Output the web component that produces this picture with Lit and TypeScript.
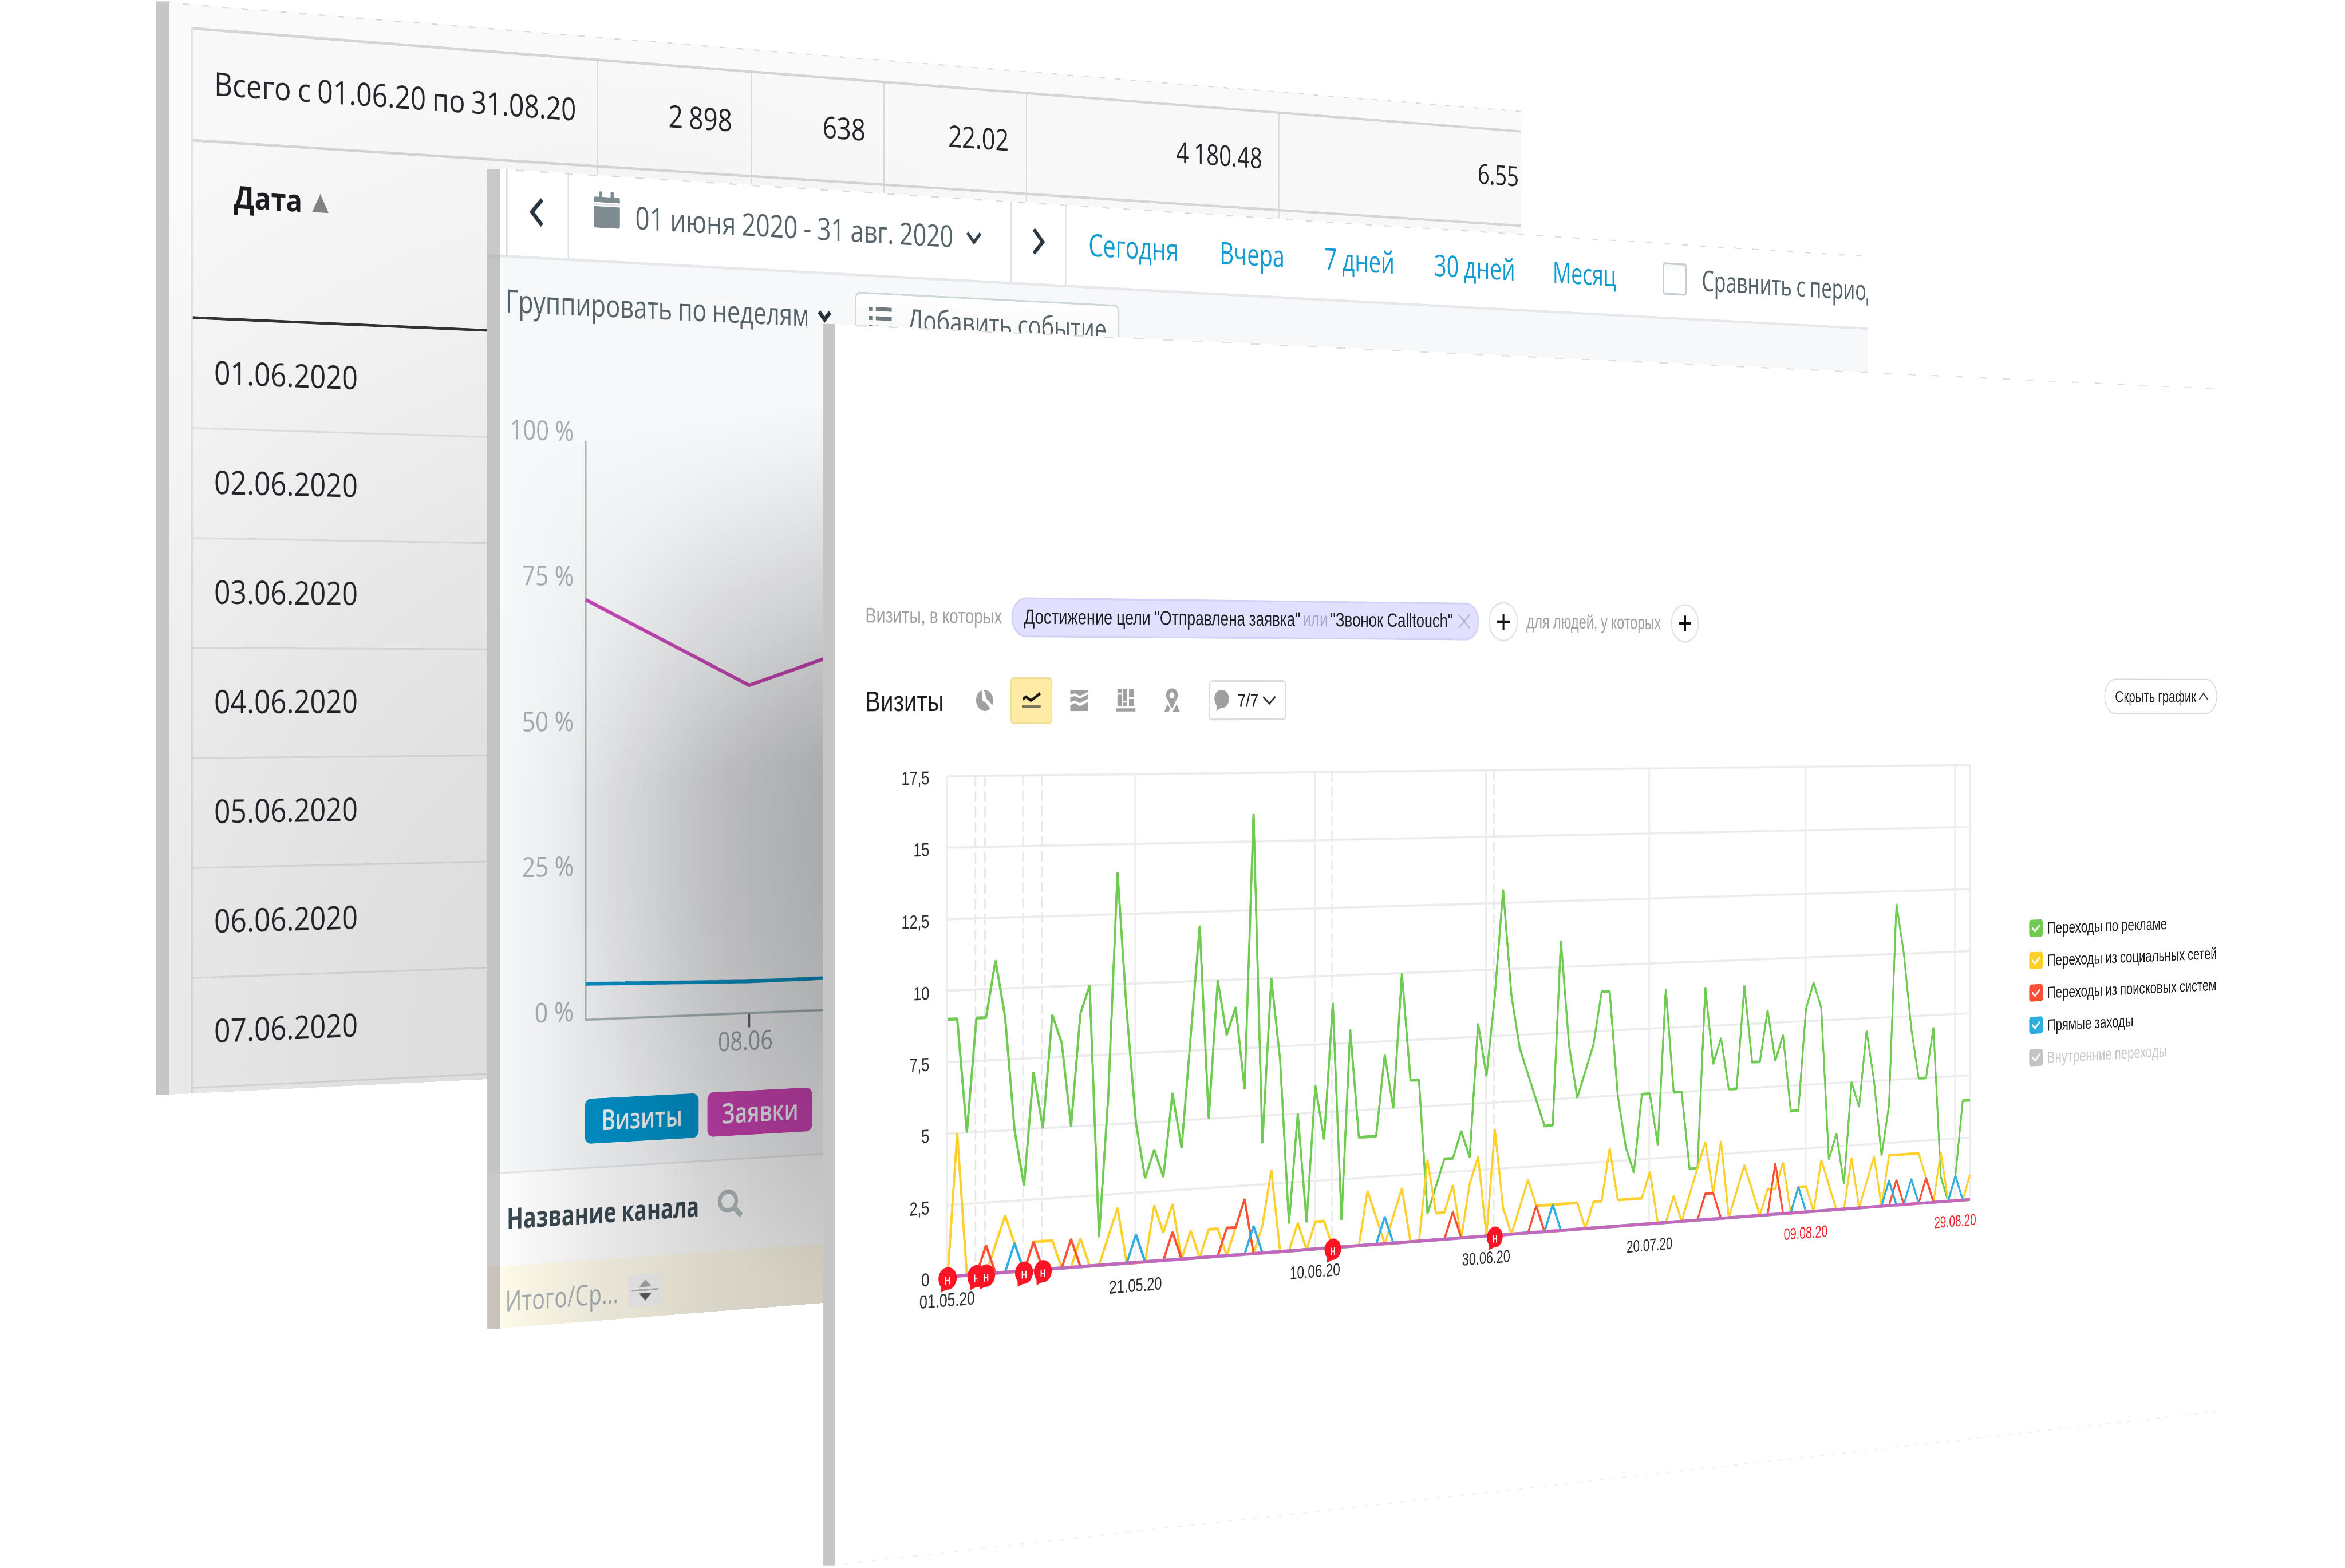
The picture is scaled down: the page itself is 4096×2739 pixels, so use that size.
import { LitElement, html, svg, css, nothing } from "lit";
import { customElement } from "lit/decorators.js";
import { styleMap } from "lit/directives/style-map.js";

/** A window standing in space: its left edge is seen flat, the right recedes. */
interface Plane {
  x: number; // left edge
  y: number; // top of the left edge
  slope: number; // fall of the top edge
  squeeze: number; // horizontal compression at the left edge
  fade: number; // loss of height per unit of width
}

const planeStyle = (p: Plane) => {
  const k = p.fade * p.squeeze;
  const m = [
    k * p.x + p.squeeze, k * p.y + p.slope * p.squeeze, 0, k,
    0, 1, 0, 0,
    0, 0, 1, 0,
    p.x, p.y, 0, 1,
  ];
  return styleMap({ transform: `matrix3d(${m.map((n) => n.toFixed(10)).join(",")})` });
};

/** A line of text set to an exact width. */
const line = (text: string, width: number, size: number, cls = "") => {
  const h = Math.round(size * 1.4);
  const bear = size * 0.05;
  return html`<svg class="line ${cls}" width=${width} height=${h} viewBox="0 0 ${width} ${h}">
    <text x=${-bear} y=${h / 2 + size * 0.358} font-size=${size}
      textLength=${width + bear * 2} lengthAdjust="spacingAndGlyphs">${text}</text>
  </svg>`;
};

const shared = css`
  :host { display: block; }
  * { box-sizing: border-box; }
  svg { display: block; overflow: visible; }
  .line { fill: currentColor; flex: none; word-spacing: -0.08em; }
  .bold { font-weight: 700; }
`;

/* ---------- Table window ---------- */

const TOTALS: [string, number][] = [
  ["2 898", 183], ["638", 126], ["22.02", 187], ["4 180.48", 287], ["6.55", 145],
];
const DATES = ["01.06.2020", "02.06.2020", "03.06.2020", "04.06.2020", "05.06.2020", "06.06.2020", "07.06.2020"];

@customElement("table-window")
class TableWindow extends LitElement {
  static styles = [shared, css`
    .window {
      position: relative; width: 4214px; height: 2377px; overflow: hidden;
      padding: 50px 0 0 57px; background: #fdfdfd; color: #23262b;
      font-family: "Open Sans", "Noto Sans", sans-serif;
    }
    .window::before, .window::after { content: ""; position: absolute; left: 0; pointer-events: none; }
    .window::before {
      top: 0; width: 100%; height: 3px;
      background: repeating-linear-gradient(90deg, transparent 0 34px, #dedede 34px 52px);
    }
    .window::after {
      inset: 0;
      background: radial-gradient(ellipse 2400px 2300px at 1300px 2350px,
        rgba(0,0,0,.13), rgba(0,0,0,.115) 30%, rgba(0,0,0,.08) 55%, rgba(0,0,0,.04) 78%, rgba(0,0,0,.012) 100%, rgba(0,0,0,.012));
    }
    .table { border-left: 4px solid #e5e5e5; background: #fbfbfb; height: 2327px; }
    .row { display: grid; grid-template-columns: 1122px 456px 408px 454px 846px 869px; }
    .cell { border-right: 4px solid #dedede; display: flex; align-items: center; justify-content: flex-end; padding-right: 59px; }
    .cell:first-child { justify-content: flex-start; padding: 0 0 0 60px; }
    .cell:last-child { border: 0; padding-right: 14px; }
    .totals { height: 250px; border-top: 6px solid #d8d8d8; border-bottom: 6px solid #d8d8d8; word-spacing: -0.14em; }
    .totals .cell { padding-bottom: 9px; }
    .totals .line { word-spacing: -0.14em; }
    .head { height: 387px; border-bottom: 6px solid #343434; }
    .head .cell:first-child { align-items: flex-start; padding: 68px 0 0 112px; gap: 30px; color: #1b1b20; }
    .arrow { margin-top: 30px; }
    .day { height: 240px; border-bottom: 4px solid #e9e6eb; display: flex; align-items: center; padding: 0 0 6px 60px; }
  `];
  render() {
    return html`<div class="window">
      <div class="table">
        <div class="row totals">
          <div class="cell">${line("Всего с 01.06.20 по 31.08.20", 995, 71)}</div>
          ${TOTALS.map(([t, w]) => html`<div class="cell">${line(t, w, 72)}</div>`)}
        </div>
        <div class="row head">
          <div class="cell">
            ${line("Дата", 177, 68, "bold")}
            <svg class="arrow" width="45" height="41" viewBox="0 0 45 41"><path d="M22.500 0 45 41H0Z" fill="#868686" /></svg>
          </div>
          ${TOTALS.map(() => html`<div class="cell"></div>`)}
        </div>
        ${DATES.map((d) => html`<div class="day">${line(d, 380, 71)}</div>`)}
      </div>
    </div>`;
  }
}

/* ---------- Channels window ---------- */

const PRESETS: [string, number][] = [
  ["Сегодня", 270], ["Вчера", 199], ["7 дней", 223], ["30 дней", 267], ["Месяц", 214],
];
const PERCENTS = [100, 75, 50, 25, 0];
const PERCENT_W = [169, 137, 137, 137, 104];

@customElement("channels-window")
class ChannelsWindow extends LitElement {
  static styles = [shared, css`
    .window {
      position: relative; width: 4312px; height: 2524px; overflow: hidden;
      display: flex; flex-direction: column; background: #f7f8fa; color: #556369;
      font-family: "Open Sans", "Noto Sans", sans-serif;
    }
    .window::before, .window::after { content: ""; position: absolute; left: 0; pointer-events: none; }
    .window::before {
      top: 0; width: 100%; height: 3px;
      background: repeating-linear-gradient(90deg, transparent 0 42px, #dcdcdc 42px 64px);
    }
    .window::after {
      top: 420px; width: 1000px; bottom: 0;
      background:
        radial-gradient(ellipse 820px 1050px at 1000px 1060px, rgba(0,0,0,.18), rgba(0,0,0,.13) 40%, transparent),
        linear-gradient(90deg, transparent, rgba(0,0,0,.08) 26%, rgba(0,0,0,.14) 55%, rgba(0,0,0,.18) 90%);
      -webkit-mask-image: linear-gradient(172deg, transparent 8%, rgba(0,0,0,.55) 26%, #000 44%);
      mask-image: linear-gradient(172deg, transparent 8%, rgba(0,0,0,.55) 26%, #000 44%);
    }
    .toolbar {
      flex: none; height: 193px; background: #fff; border-bottom: 6px solid #e6e8eb;
      display: grid; grid-template-columns: 163px 1249px 164px 1fr; padding-left: 16px;
    }
    .cell { border-left: 4px solid #dfe1e2; display: flex; align-items: center; justify-content: center; padding-bottom: 8px; }
    .prev { padding-right: 8px; }
    .date { display: grid; grid-template-columns: 115px 933px 45px; justify-content: start; padding-left: 66px; }
    .calendar { margin-bottom: 28px; }
    .presets { display: grid; grid-template-columns: 407px 335px 362px 403px 384px 143px auto; justify-content: start; padding: 0 0 8px 71px; color: #0e9bd2; }
    .presets .line { word-spacing: -0.12em; }
    .box { width: 85px; height: 82px; border: 5px solid #c5ced2; border-radius: 8px; background: linear-gradient(#f4f6f7, #fff 25%); }
    .compare, .grouping { color: #556369; }
    .options { flex: none; margin-top: 35px; height: 118px; padding-left: 18px; display: grid; grid-template-columns: 849px 106px 785px; align-items: center; }
    .add { height: 118px; border: 4px solid #cdd7da; border-radius: 16px; background: linear-gradient(#fff, #f4f5f6); display: grid; grid-template-columns: 117px auto; justify-content: start; align-items: center; padding-left: 35px; }
    .chart { flex: none; margin-top: 134px; font-size: 60px; }
    .badges { flex: none; margin-top: 54px; padding-left: 225px; display: flex; gap: 24px; color: #f0f4f6; font-weight: 600; }
    .badge { height: 99px; border-radius: 16px; display: flex; align-items: center; justify-content: center; padding-bottom: 3px; }
    .visits { width: 309px; background: #0093cb; }
    .orders { width: 293px; background: #cc44b5; }
    .channels { flex: none; margin-top: 51px; height: 205px; border-top: 4px solid #e6e7ea; background: #fdfdfe; color: #3a4850; display: grid; grid-template-columns: 566px 70px; align-items: center; padding: 0 0 5px 21px; }
    .total { flex: none; height: 135px; background: #fefaea; color: #a4adb2; display: grid; grid-template-columns: 325px 89px; align-items: center; padding: 16px 0 0 17px; }
    .sort { width: 89px; height: 71px; background: #f6f6f8; }
  `];
  render() {
    return html`<div class="window">
      <div class="toolbar">
        <div class="cell prev">
          <svg width="41" height="64" viewBox="0 0 41 64"><path d="M36 4 9 32 36 60" fill="none" stroke="#2a3742" stroke-width="9.500" /></svg>
        </div>
        <div class="cell date">
          <svg class="calendar" width="70" height="80" viewBox="0 0 70 80" fill="#7e8b8f">
            <rect x="14" y="0" width="9" height="18" rx="3" /><rect x="45" y="0" width="9" height="18" rx="3" />
            <path d="M4 12H66Q70 12 70 16V24H0V16Q0 12 4 12Z" /><path d="M0 33H70V74Q70 80 64 80H6Q0 80 0 74Z" />
            <rect x="0" y="27" width="70" height="3" fill="#dfe3e4" />
          </svg>
          ${line("01 июня 2020 - 31 авг. 2020", 891, 70)}
          <svg width="45" height="28" viewBox="0 0 45 28"><path d="M3 3 22.500 24 42 3" fill="none" stroke="#36434d" stroke-width="8" /></svg>
        </div>
        <div class="cell">
          <svg width="36" height="64" viewBox="0 0 36 64"><path d="M4 4 31 32 4 60" fill="none" stroke="#2a3742" stroke-width="9.500" /></svg>
        </div>
        <div class="cell presets">
          ${PRESETS.map(([t, w]) => line(t, w, 74))}
          <span class="box"></span>
          ${line("Сравнить с период", 641, 73, "compare")}
        </div>
      </div>
      <div class="options">
        ${line("Группировать по неделям", 821, 70, "grouping")}
        <svg width="39" height="24" viewBox="0 0 39 24"><path d="M4 3 19.500 20 35 3" fill="none" stroke="#26333d" stroke-width="10" /></svg>
        <div class="add">
          <svg width="68" height="52" viewBox="0 0 68 52" fill="#6d797e">
            ${[0, 21, 42].map((y) => svg`<rect x="2" y=${y} width="9" height="9" /><rect x="21" y=${y} width="46" height="9" />`)}
          </svg>
          ${line("Добавить событие", 586, 70)}
        </div>
      </div>
      <svg class="chart" width="1130" height="1500" viewBox="0 480 1130 1500">
        ${PERCENTS.map((p, i) => svg`<text x=${195 - PERCENT_W[i]} y=${588 + i * 318.5}
          textLength=${PERCENT_W[i]} lengthAdjust="spacingAndGlyphs" fill="#a3adb1">${p} %</text>`)}
        <path d="M227 587V1860H1130" fill="none" stroke="#aab7bc" stroke-width="5" />
        <path d="M674 1862V1892" stroke="#555c60" stroke-width="5" />
        <text x="587" y="1943" textLength="153" lengthAdjust="spacingAndGlyphs" fill="#98a3a7">08.06</text>
        <path d="M227 1781 674 1789 1121 1786" fill="none" stroke="#0a93c9" stroke-width="8" />
        <path d="M227 936 674 1124 1121 997" fill="none" stroke="#c947b6" stroke-width="8" />
      </svg>
      <div class="badges">
        <div class="badge visits">${line("Визиты", 213, 64)}</div>
        <div class="badge orders">${line("Заявки", 208, 64)}</div>
      </div>
      <div class="channels">
        ${line("Название канала", 511, 63, "bold")}
        <svg width="70" height="64" viewBox="0 0 70 64"><ellipse cx="28" cy="25" rx="23" ry="21" fill="none" stroke="#b5bdbf" stroke-width="10" /><path d="M44 40 65 59" stroke="#b5bdbf" stroke-width="12" /></svg>
      </div>
      <div class="total">
        ${line("Итого/Ср...", 295, 63)}
        <svg class="sort" viewBox="0 0 89 71"><path d="M46 12 63 28H29Z" fill="#ababab" /><rect x="9" y="33" width="71" height="4" fill="#b9b9b9" /><path d="M46 58 29 42H63Z" fill="#5c5c5c" /></svg>
      </div>
    </div>`;
  }
}

/* ---------- Visits window ---------- */

const DAYS = 122;
const ADS = [
  9, 9, 5, 9, 9, 11, 9, 5, 3, 7, 5, 9, 8, 5, 9, 10, 1, 6, 14, 9, 5, 3, 4, 3, 6, 4, 8, 12, 5, 10, 8, 9, 6, 16, 4, 10, 7, 1, 5, 1, 6,
  4, 9, 1, 8, 4, 4, 4, 7, 5, 10, 6, 6, 1, 2, 3, 3, 4, 3, 8, 6, 9, 13, 9, 7, 6, 5, 4, 4, 11, 7, 5, 6, 7, 9, 9, 5, 3, 2, 5, 5,
  3, 9, 5, 5, 2, 2, 9, 6, 7, 5, 5, 9, 6, 6, 8, 6, 7, 4, 4, 8, 9, 8, 2, 3, 1, 5, 4, 7, 5, 2, 4, 12, 10, 7, 5, 5, 7, 1, 0, 1, 4, 4,
];
const SOCIAL = [
  0, 5, 0, 0, 0, 1, 2, 1, 0, 1, 1, 1, 0, 0, 1, 0, 0, 1, 2, 0, 0, 0, 2, 1, 2, 0, 1, 0, 1, 1, 0, 1, 2, 0, 1, 3, 0, 0, 1, 0, 1,
  1, 0, 0, 0, 0, 2, 1, 0, 1, 2, 0, 0, 3, 1, 1, 2, 0, 2, 3, 0, 4, 1, 0, 1, 2, 1, 1, 1, 1, 1, 1, 0, 1, 1, 3, 1, 1, 1, 1, 2,
  0, 0, 1, 0, 1, 2, 3, 1, 3, 0, 1, 2, 1, 0, 1, 1, 2, 0, 1, 1, 0, 2, 1, 0, 0, 2, 0, 1, 2, 0, 2, 2, 2, 2, 2, 1, 0, 2, 0, 0, 0, 1,
];
const sparse = (hits: Record<number, number>) => Array.from({ length: DAYS + 1 }, (_, i) => hits[i] ?? 0);
const SEARCH = sparse({ 4: 1, 9: 1, 13: 1, 24: 1, 30: 1, 31: 1, 32: 2, 56: 1, 66: 1, 87: 1, 88: 1, 96: 2, 112: 1, 116: 1 });
const DIRECT = sparse({ 7: 1, 20: 1, 33: 1, 48: 1, 68: 1, 99: 1, 111: 1, 114: 1, 120: 1 });
const INNER = sparse({});

const X0 = 328.5;
const X1 = 3798.5;
const YTOP = 987;
const YBASE = 2092;
const px = (day: number) => X0 + ((X1 - X0) * day) / DAYS;
const py = (v: number) => YBASE - ((YBASE - YTOP) * v) / 17.5;
const points = (data: number[]) => data.map((v, i) => `${px(i).toFixed(1)},${py(v).toFixed(1)}`).join(" ");

const SERIES: [number[], string][] = [
  [ADS, "#70cb52"], [SOCIAL, "#ffcf2d"], [SEARCH, "#ff5035"], [DIRECT, "#31aee1"], [INNER, "#c566bd"],
];
const TICKS: [number, string, boolean][] = [
  [0, "01.05.20", false], [20, "21.05.20", false], [40, "10.06.20", false], [60, "30.06.20", false],
  [80, "20.07.20", false], [100, "09.08.20", true], [120, "29.08.20", true],
];
const NOTES = [0, 3, 4, 8, 10, 42, 61];
const LEVELS: [number, string][] = [
  [17.5, "17,5"], [15, "15"], [12.5, "12,5"], [10, "10"], [7.5, "7,5"], [5, "5"], [2.5, "2,5"], [0, "0"],
];
const LEGEND: [string, number, string][] = [
  ["Переходы по рекламе", 484, "#70cb52"],
  ["Переходы из социальных сетей", 693, "#ffcf2d"],
  ["Переходы из поисковых систем", 691, "#ff5035"],
  ["Прямые заходы", 346, "#31aee1"],
  ["Внутренние переходы", 484, "#c4c4c4"],
];

@customElement("visits-window")
class VisitsWindow extends LitElement {
  static styles = [shared, css`
    .window {
      position: relative; width: 4811px; height: 2702px; padding: 583px 10px 0 91px; background: #fff; color: #1c1c20;
      font-family: "Liberation Sans", Arial, sans-serif;
    }
    .window::before, .window::after { content: ""; position: absolute; left: 0; width: 100%; height: 3px; }
    .window::before { top: 0; background: repeating-linear-gradient(90deg, transparent 0 62px, #e0e0e0 62px 92px); }
    .window::after { bottom: 0; background: repeating-linear-gradient(90deg, transparent 0 26px, #f1f1f1 26px 40px); }
    .filter { height: 102px; display: grid; grid-template-columns: 427px 1524px 132px 505px 99px; align-items: center; }
    .filter .line { margin-bottom: 3px; }
    .muted { color: #a0a0a0; }
    .or { color: #aaa6cc; }
    .pill { width: 1492px; height: 89px; border-radius: 45px; background: #e1e1ff; border: 4px solid #d3d1f5; padding-left: 36px; display: grid; grid-template-columns: 869px 90px 423px 39px; align-items: center; }
    .plus { width: 101px; height: 94px; border-radius: 50%; border: 4px solid #e3e3e3; display: flex; align-items: center; justify-content: center; }
    .tools { margin-top: 82px; height: 105px; display: grid; grid-template-columns: 320px 104px 181px 141px 148px 141px 246px 1fr; align-items: center; }
    .chosen { width: 126px; height: 105px; border-radius: 10px; background: #ffeba6; border: 4px solid #f3dd9b; display: flex; align-items: center; justify-content: center; }
    .notes { height: 92px; border: 4px solid #dcdcdc; border-radius: 10px; padding-left: 13px; display: grid; grid-template-columns: 75px 78px 43px; align-items: center; }
    .hide { justify-self: end; margin-bottom: 14px; width: 467px; height: 92px; border: 3px solid #d9d9d9; border-radius: 46px; padding-left: 43px; display: grid; grid-template-columns: 344px 40px; align-items: center; }
    .body { margin-top: 28px; display: grid; grid-template-columns: 3941px 1fr; }
    .plot { font-size: 42px; }
    .legend { padding-top: 466px; }
    .item { height: 83.2px; display: grid; grid-template-columns: 73px auto; justify-content: start; align-items: center; }
    .check { width: 54px; height: 44px; border-radius: 8px; display: flex; align-items: center; justify-content: center; }
    .off { color: #c9c9c9; }
  `];
  private plus = html`<span class="plus"><svg width="42" height="38" viewBox="0 0 42 38"><path d="M21 0V38M0 19H42" stroke="#111" stroke-width="6" /></svg></span>`;

  render() {
    return html`<div class="window">
      <div class="filter">
        ${line("Визиты, в которых", 397, 46, "muted")}
        <div class="pill">
          ${line('Достижение цели "Отправлена заявка"', 857, 46)}
          ${line("или", 78, 46, "or")}
          ${line('"Звонок Calltouch"', 402, 46)}
          <svg width="39" height="34" viewBox="0 0 39 34"><path d="M1 1 38 33M38 1 1 33" stroke="#b3b1cf" stroke-width="3.500" /></svg>
        </div>
        ${this.plus}
        ${line("для людей, у которых", 467, 46, "muted")}
        ${this.plus}
      </div>
      <div class="tools">
        ${line("Визиты", 223, 63)}
        <svg width="52" height="48" viewBox="0 0 52 48">
          <path d="M18 1A26 24 0 1 0 44 42L29 27A8 8 0 0 1 21 15Z" fill="#a0a0a0" /><path d="M25 0A26 24 0 0 1 50 34L33 20Z" fill="#a0a0a0" />
        </svg>
        <div class="chosen">
          <svg width="57" height="35" viewBox="0 0 57 35"><path d="M2 14 12 9 27 17 55 1" fill="none" stroke="#1d1a12" stroke-width="6.500" /><rect y="28" width="56" height="6" fill="#77705a" /></svg>
        </div>
        <svg width="55" height="48" viewBox="0 0 55 48" fill="#a0a0a0">
          <path d="M0 0H55V5L29 14 14 8 0 11Z" /><path d="M0 17 14 14 29 20 55 10V20L29 30 14 24 0 28Z" /><path d="M0 35 14 30 29 37 55 27V48H0Z" />
        </svg>
        <svg width="59" height="50" viewBox="0 0 59 50" fill="#a0a0a0">
          <rect x="3" width="13" height="8" /><rect x="3" y="12" width="13" height="26" /><rect x="21" width="13" height="26" /><rect x="21" y="30" width="13" height="8" />
          <rect x="39" width="15" height="18" /><rect x="39" y="22" width="15" height="16" /><rect y="43" width="59" height="7" />
        </svg>
        <svg width="49" height="54" viewBox="0 0 49 54" fill="#a0a0a0">
          <path fill-rule="evenodd" d="M24.500 0C36 0 43 7 43 15 43 24 34 27 28 44H21C15 27 6 24 6 15 6 7 13 0 24.500 0ZM24.500 9A8 7 0 1 0 24.500 23 8 7 0 1 0 24.500 9Z" />
          <path d="M10 36 0 54H14L19 45Z" /><path d="M39 36 49 54H24L33 45Z" />
        </svg>
        <div class="notes">
          <svg width="46" height="49" viewBox="0 0 46 49"><path d="M23 0C36 0 46 9 46 21S36 42 23 42Q16 42 5 49L9 38Q0 31 0 21C0 9 10 0 23 0Z" fill="#a0a0a0" /></svg>
          ${line("7/7", 63, 43)}
          <svg width="43" height="21" viewBox="0 0 43 21"><path d="M2 2 21.500 18 41 2" fill="none" stroke="#333" stroke-width="4.500" /></svg>
        </div>
        <div class="hide">
          ${line("Скрыть график", 331, 43)}
          <svg width="40" height="22" viewBox="0 0 40 22"><path d="M2 20 20 3 38 20" fill="none" stroke="#444" stroke-width="4" /></svg>
        </div>
      </div>
      <div class="body">
        <svg class="plot" width="3800" height="1300" viewBox="91 900 3800 1300">
          ${LEVELS.map(([v, t]) => svg`
            <path d="M${X0} ${py(v)}H${X1}" stroke="#ececec" stroke-width="5" />
            <text x="275" y=${py(v) + 18} text-anchor="end" fill="#2a2a30">${t}</text>`)}
          ${TICKS.map(([d]) => svg`<path d="M${px(d) - 2} ${YTOP}V${YBASE}" stroke="#eeeeee" stroke-width="6" />`)}
          <path d="M${X1} ${YTOP}V${YBASE}" stroke="#ececec" stroke-width="4" />
          ${NOTES.map((d) => (d ? svg`<path d="M${px(d) - 3} ${YTOP}V${YBASE}" stroke="#e9e9e9" stroke-width="5" stroke-dasharray="24 10" />` : nothing))}
          ${SERIES.map(([data, color]) => svg`<polyline points=${points(data)} fill="none" stroke=${color} stroke-width="6.800" stroke-linejoin="bevel" />`)}
          ${TICKS.map(([d, t, weekend]) => svg`<text x=${px(d) - 1} y="2158" text-anchor="middle" fill=${weekend ? "#f5222d" : "#2a2a30"}>${t}</text>`)}
          ${NOTES.map((d) => svg`<g transform="translate(${px(d)} 2096)">
            <ellipse rx="27" ry="25" fill="#fb1423" /><path d="M-20 8-19 30 4 22Z" fill="#fb1423" />
            <text y="13" text-anchor="middle" font-size="24" font-weight="700" fill="#fff">H</text></g>`)}
        </svg>
        <div class="legend">
          ${LEGEND.map(([t, w, color], i) => html`<div class="item ${i === 4 ? "off" : ""}">
            <span class="check" style=${styleMap({ background: color })}>
              <svg width="34" height="22" viewBox="0 0 34 22"><path d="M2 10 13 19 32 3" fill="none" stroke="#fff" stroke-width="5" /></svg>
            </span>
            ${line(t, w, 42)}
          </div>`)}
        </div>
      </div>
    </div>`;
  }
}

/* ---------- Scene ---------- */

const TABLE: Plane = { x: 369, y: 5, slope: 0.0804, squeeze: 0.83, fade: 5.41e-5 };
const CHANNELS: Plane = { x: 1088, y: 367, slope: 0.0639, squeeze: 0.83, fade: 5.65e-5 };
const VISITS: Plane = { x: 1816, y: 705, slope: 0.0465, squeeze: 0.76, fade: 5.83e-5 };

@customElement("app-root")
class AppRoot extends LitElement {
  static styles = css`
    :host { display: block; width: 4096px; height: 2739px; overflow: hidden; background: #fff; }
    .scene { position: relative; width: 5103px; height: 3413px; transform: scale(0.80266); transform-origin: 0 0; }
    .plane { position: absolute; left: 0; top: 0; transform-origin: 0 0; }
    .side { position: absolute; background: #c6c6c6; }
    .table-side { left: 340px; top: 3px; width: 30px; height: 2380px; }
    .channels-side {
      left: 1060px; top: 367px; width: 29px; height: 2524px;
      background: linear-gradient(#c9c9c9 0 187px, #bdbfc0 187px 195px, #c3c4c4 195px 2184px, #c9c9c9 2186px 2388px, #c7c3ba 2390px);
    }
    .visits-side { left: 1791px; top: 705px; width: 26px; height: 2702px; }
  `;
  render() {
    return html`<main class="scene">
      <div class="side table-side"></div>
      <table-window class="plane" style=${planeStyle(TABLE)}></table-window>
      <div class="side channels-side"></div>
      <channels-window class="plane" style=${planeStyle(CHANNELS)}></channels-window>
      <div class="side visits-side"></div>
      <visits-window class="plane" style=${planeStyle(VISITS)}></visits-window>
    </main>`;
  }
}
